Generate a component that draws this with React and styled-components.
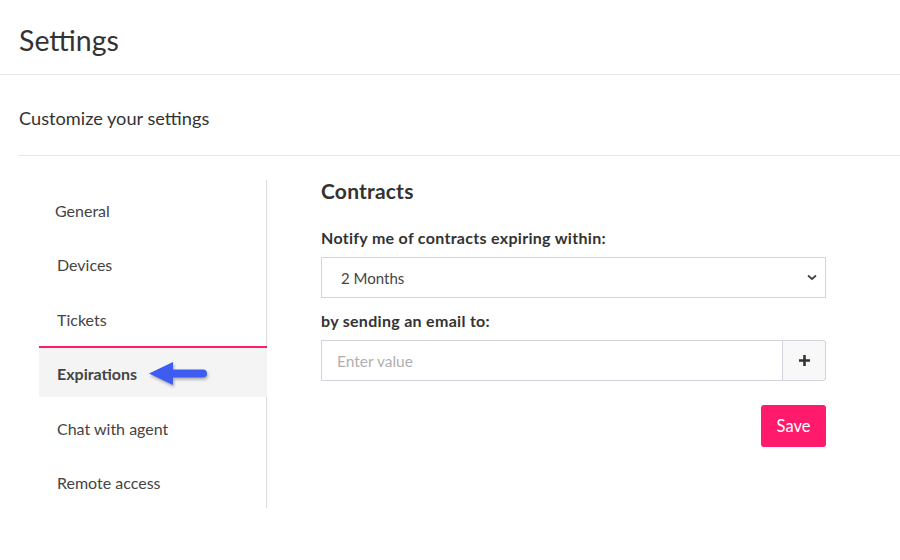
import React from "react";
import styled, { createGlobalStyle } from "styled-components";

const Global = createGlobalStyle`
  html, body { margin: 0; padding: 0; background: #fff; }
  body { font-family: Lato, "Noto Sans", sans-serif; color: #333; }
  * { box-sizing: border-box; }
`;

const Page = styled.div`
  width: 900px;
  height: 560px;
  overflow: hidden;
  background: #fff;
`;

const Header = styled.header`
  height: 75px;
  display: flex;
  align-items: center;
  padding: 5px 19px 0;
  border-bottom: 1px solid #e6e6e6;
`;

const Title = styled.h1`
  margin: 0;
  font-size: 28.5px;
  font-weight: 400;
  color: #333;
`;

const Body = styled.div`
  padding-left: 18px;
`;

const SubHeader = styled.div`
  height: 81px;
  display: flex;
  align-items: center;
  padding: 6px 1px 0;
  border-bottom: 1px solid #e6e6e6;
  font-size: 18.2px;
  color: #333;
`;

const Main = styled.div`
  display: flex;
  padding: 24px 0 0 21px;
`;

const Sidebar = styled.nav`
  width: 228px;
  height: 328px;
  padding-top: 3px;
  border-right: 1px solid #dedede;
  display: flex;
  flex-direction: column;
  gap: 3.4px;
`;

const NavItem = styled.div`
  position: relative;
  height: 51px;
  display: flex;
  align-items: center;
  padding: 2px 0 0 ${(p) => p.$indent}px;
  border-top: 2.5px solid ${(p) => (p.$active ? "#ff1a6c" : "transparent")};
  background: ${(p) => (p.$active ? "#f4f4f4" : "transparent")};
  font-size: 16px;
  font-weight: ${(p) => (p.$active ? 700 : 400)};
  color: #444;
  margin-right: -1px;
`;

const Pointer = styled.svg`
  position: absolute;
  left: 108px;
  top: 12px;
  filter: drop-shadow(1px 2px 1.5px rgba(0, 0, 0, 0.3));
`;

const Content = styled.section`
  width: 505px;
  margin-left: 54px;
  display: flex;
  flex-direction: column;
`;

const SectionTitle = styled.h2`
  margin: 0;
  height: 21px;
  line-height: 21px;
  font-size: 21px;
  letter-spacing: 0.2px;
  font-weight: 700;
  color: #333;
`;

const Label = styled.label`
  display: block;
  margin: ${(p) => p.$top}px 0 10px;
  font-size: 16px;
  letter-spacing: 0.3px;
  font-weight: 700;
  color: #333;
  line-height: 18px;
`;

const SelectBox = styled.div`
  position: relative;
  height: 41px;
  border: 1px solid #d3d3de;
  display: flex;
  align-items: center;
  padding: 0 19px;
  font-size: 15px;
  color: #444;
`;

const Chevron = styled.svg`
  position: absolute;
  right: 8px;
  top: 16px;
`;

const InputGroup = styled.div`
  display: flex;
  height: 41px;
`;

const Input = styled.input`
  flex: 1;
  height: 100%;
  border: 1px solid #d3d3de;
  border-right: none;
  padding: 0 15px;
  font-family: inherit;
  font-size: 15.5px;
  color: #444;
  outline: none;
  &::placeholder { color: #b0b0b0; }
`;

const AddButton = styled.button`
  width: 44px;
  height: 100%;
  border: 1px solid #d3d3de;
  border-radius: 0 3px 3px 0;
  background: #f8f8f8;
  display: flex;
  align-items: center;
  justify-content: center;
  padding: 0;
`;

const Actions = styled.div`
  display: flex;
  justify-content: flex-end;
  margin-top: 24px;
`;

const SaveButton = styled.button`
  width: 65px;
  height: 42px;
  border: none;
  border-radius: 3px;
  background: #ff1a6c;
  color: #fff;
  font-family: inherit;
  font-size: 16.5px;
`;

const items = [
  { label: "General", indent: 16 },
  { label: "Devices", indent: 18 },
  { label: "Tickets", indent: 18 },
  { label: "Expirations", indent: 18, active: true },
  { label: "Chat with agent", indent: 18 },
  { label: "Remote access", indent: 18 },
];

export default function App() {
  return (
    <Page>
      <Global />
      <Header>
        <Title>Settings</Title>
      </Header>
      <Body>
        <SubHeader>Customize your settings</SubHeader>
        <Main>
          <Sidebar>
            {items.map((it) => (
              <NavItem key={it.label} $indent={it.indent} $active={it.active}>
                {it.label}
                {it.active && (
                  <Pointer width="64" height="30" viewBox="0 0 64 30">
                    <path
                      d="M2 13.5 L26 2 L26 9.5 L56 9.5 A4 4 0 0 1 56 17.5 L26 17.5 L26 25 Z"
                      fill="#3f5cf2"
                    />
                  </Pointer>
                )}
              </NavItem>
            ))}
          </Sidebar>
          <Content>
            <SectionTitle>Contracts</SectionTitle>
            <Label $top={28}>Notify me of contracts expiring within:</Label>
            <SelectBox>
              2 Months
              <Chevron width="10" height="7" viewBox="0 0 10 7">
                <path d="M1 1.5 L5 5 L9 1.5" fill="none" stroke="#444" strokeWidth="1.8" />
              </Chevron>
            </SelectBox>
            <Label $top={14}>by sending an email to:</Label>
            <InputGroup>
              <Input placeholder="Enter value" />
              <AddButton>
                <svg width="13" height="13" viewBox="0 0 13 13">
                  <path d="M6.5 1 V12 M1 6.5 H12" stroke="#333" strokeWidth="2.6" />
                </svg>
              </AddButton>
            </InputGroup>
            <Actions>
              <SaveButton>Save</SaveButton>
            </Actions>
          </Content>
        </Main>
      </Body>
    </Page>
  );
}
